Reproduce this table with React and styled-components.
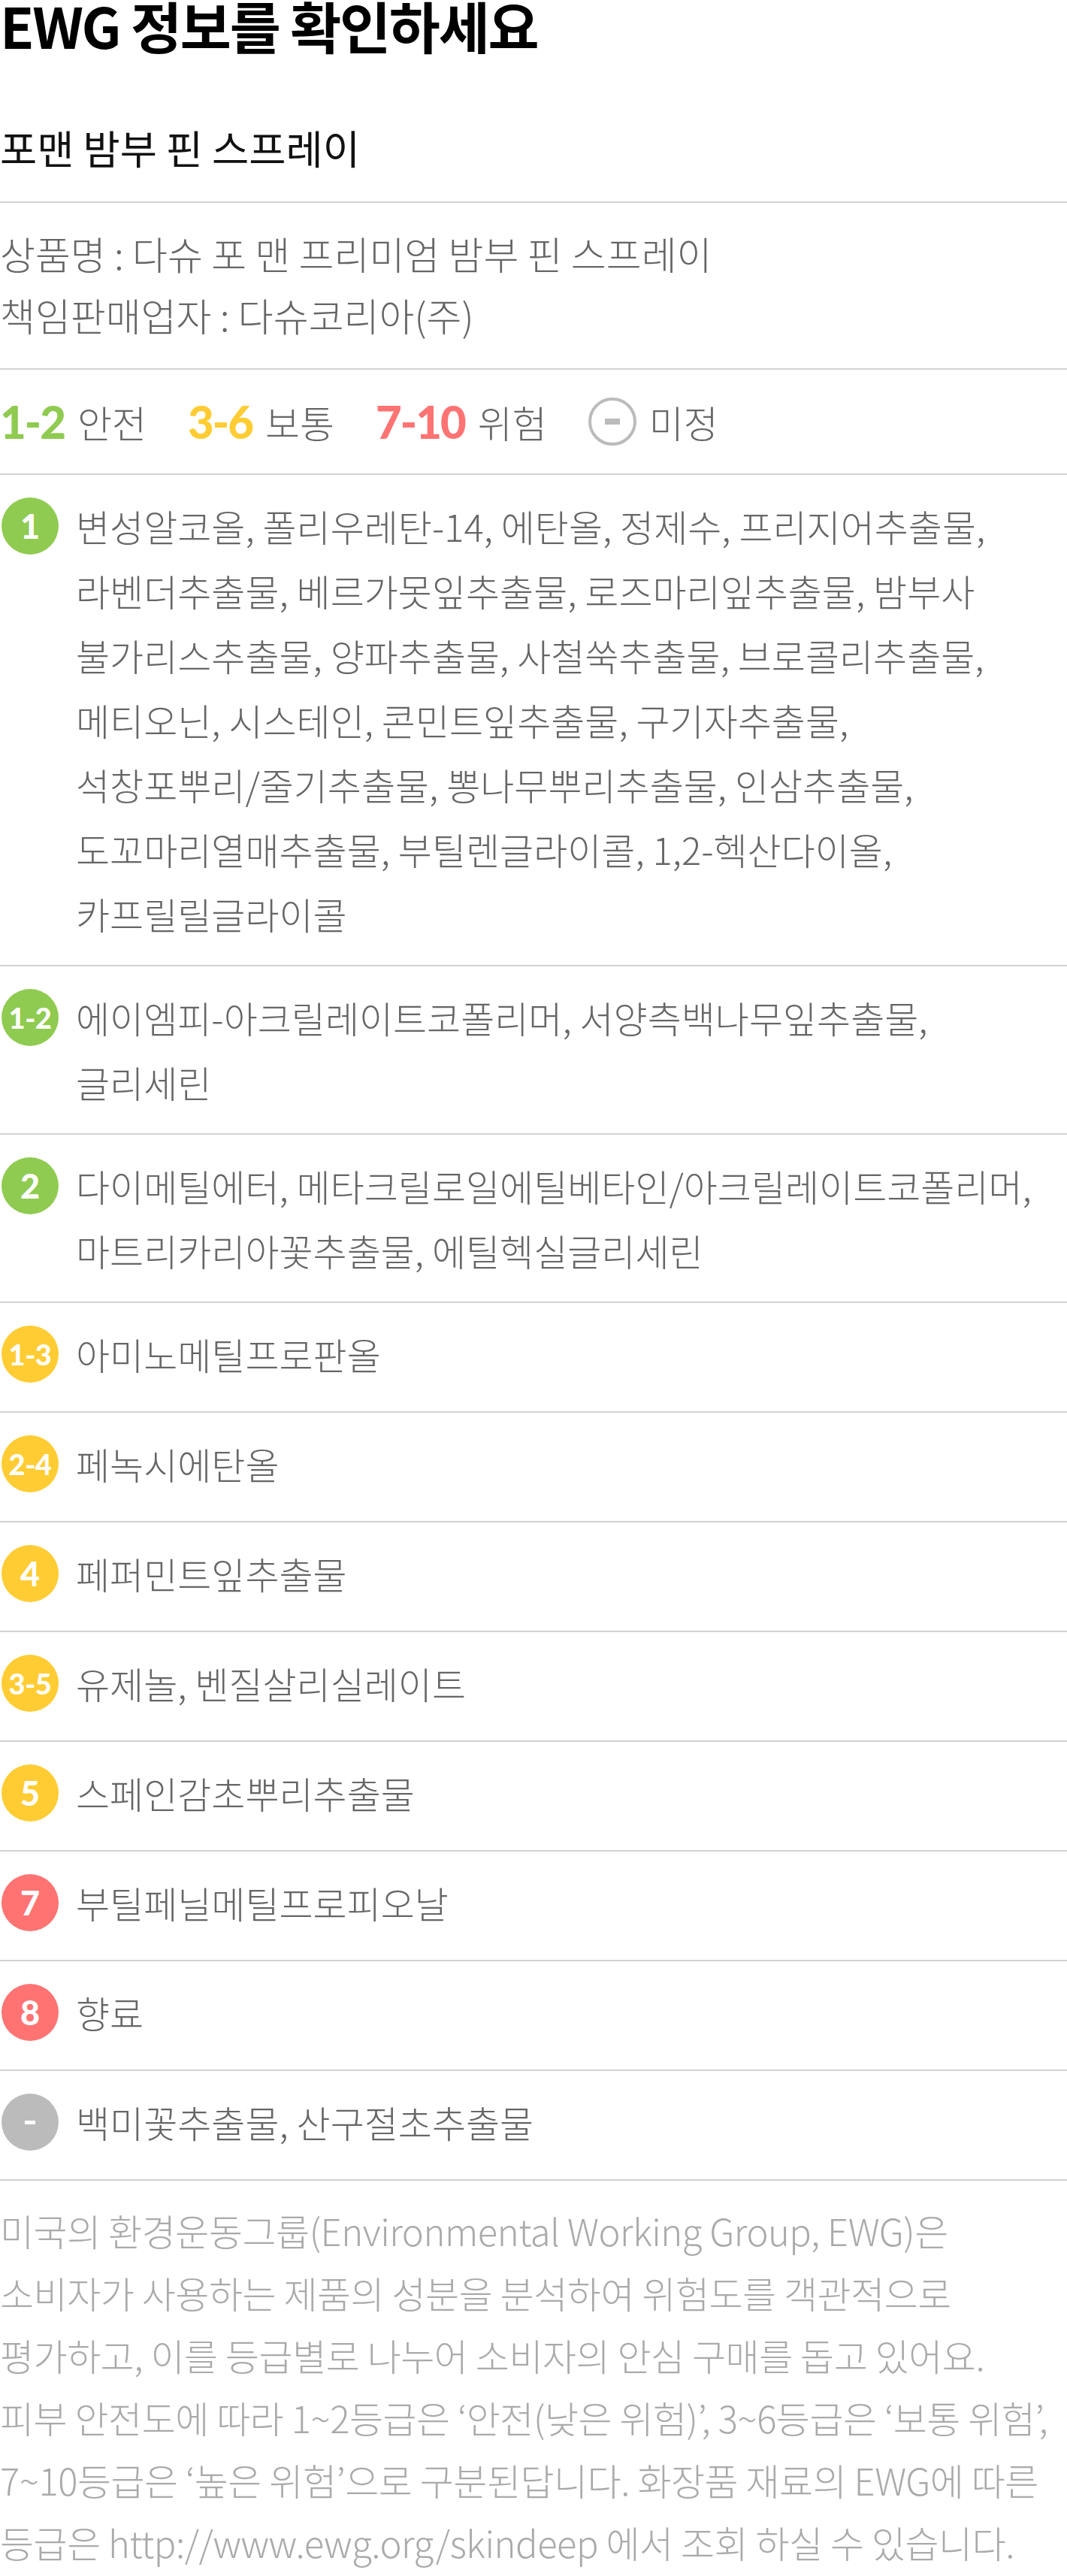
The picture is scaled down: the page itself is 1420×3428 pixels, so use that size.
import React from 'react';
import styled, { createGlobalStyle } from 'styled-components';

const GlobalStyle = createGlobalStyle`
  html, body { margin: 0; padding: 0; background: #fff; }
  body {
    font-family: "Noto Sans CJK KR", "Noto Sans", sans-serif;
    -webkit-font-smoothing: antialiased;
  }
  * { box-sizing: border-box; }
`;

const COLORS = {
  green: '#8fcb50',
  yellow: '#ffcc33',
  red: '#ff7373',
  gray: '#bbbbbb',
};

const Page = styled.main`
  width: 1420px;
  word-break: keep-all;
`;

const Title = styled.h1`
  margin: 0;
  font-size: 74px;
  font-weight: 700;
  line-height: 66px;
  letter-spacing: -0.03em;
  color: #000;
`;

const ProductName = styled.h2`
  margin: 0;
  padding: 90px 0 32px;
  border-bottom: 2px solid #d2d2d2;
  font-size: 53.5px;
  font-weight: 400;
  line-height: 80px;
  color: #111;
`;

const Info = styled.section`
  padding: 26px 0 30px;
  border-bottom: 2px solid #d2d2d2;
`;

const InfoLine = styled.p`
  margin: 0;
  font-size: 51px;
  font-weight: 300;
  line-height: 82px;
  color: #666;
`;

const Legend = styled.section`
  display: flex;
  align-items: center;
  gap: 55px;
  height: 140px;
  border-bottom: 2px solid #d2d2d2;
`;

const LegendItem = styled.div`
  display: flex;
  align-items: center;
  gap: 17px;
`;

const LegendRange = styled.span`
  font-family: "Lato", "Noto Sans", sans-serif;
  font-weight: 900;
  font-size: 60px;
  line-height: 1;
  letter-spacing: -2px;
  color: ${(p) => p.$color};
`;

const LegendLabel = styled.span`
  font-size: 50px;
  font-weight: 300;
  line-height: 1;
  color: #666;
`;

const UnsetMark = styled.span`
  display: flex;
  align-items: center;
  justify-content: center;
  width: 64px;
  height: 64px;
  border: 4px solid #bbb;
  border-radius: 50%;
`;

const UnsetDash = styled.span`
  display: block;
  width: 20px;
  height: 8px;
  background: #bbb;
`;

const Row = styled.section`
  display: flex;
  align-items: flex-start;
  gap: 23px;
  min-height: 146px;
  padding: 25px 20px 25px 2px;
  border-bottom: 2px solid #d2d2d2;
`;

const Badge = styled.span`
  flex: none;
  display: flex;
  align-items: center;
  justify-content: center;
  width: 76px;
  height: 76px;
  margin-top: 5px;
  border-radius: 50%;
  background: ${(p) => p.$color};
  color: #fff;
  font-family: "Lato", "Noto Sans", sans-serif;
  font-weight: 900;
  font-size: ${(p) => (p.$long ? '38px' : '45px')};
  letter-spacing: ${(p) => (p.$long ? '-0.5px' : '0')};
  line-height: 1;
`;

const BadgeDash = styled.span`
  display: block;
  width: 14px;
  height: 5px;
  background: #fff;
`;

const Ingredients = styled.p`
  flex: 1;
  margin: 0;
  font-size: 49px;
  font-weight: 300;
  line-height: 86px;
  color: #666;
`;

const Name = styled.span`
  white-space: nowrap;
`;

const Footer = styled.footer`
  padding-top: 24px;
`;

const FooterText = styled.p`
  margin: 0;
  font-size: 49px;
  font-weight: 300;
  line-height: 83px;
  letter-spacing: -0.01em;
  color: #aaa;
`;

const FooterLine = styled.span`
  display: block;
  white-space: nowrap;
`;

const ROWS = [
  {
    grade: '1',
    color: 'green',
    names: [
      '변성알코올', '폴리우레탄-14', '에탄올', '정제수', '프리지어추출물',
      '라벤더추출물', '베르가못잎추출물', '로즈마리잎추출물', ['밤부사', '불가리스추출물'],
      '양파추출물', '사철쑥추출물', '브로콜리추출물', '메티오닌', '시스테인',
      '콘민트잎추출물', '구기자추출물', '석창포뿌리/줄기추출물', '뽕나무뿌리추출물',
      '인삼추출물', '도꼬마리열매추출물', '부틸렌글라이콜', '1,2-헥산다이올', '카프릴릴글라이콜',
    ],
  },
  { grade: '1-2', color: 'green', names: ['에이엠피-아크릴레이트코폴리머', '서양측백나무잎추출물', '글리세린'] },
  {
    grade: '2',
    color: 'green',
    names: ['다이메틸에터', '메타크릴로일에틸베타인/아크릴레이트코폴리머', '마트리카리아꽃추출물', '에틸헥실글리세린'],
  },
  { grade: '1-3', color: 'yellow', names: ['아미노메틸프로판올'] },
  { grade: '2-4', color: 'yellow', names: ['페녹시에탄올'] },
  { grade: '4', color: 'yellow', names: ['페퍼민트잎추출물'] },
  { grade: '3-5', color: 'yellow', names: ['유제놀', '벤질살리실레이트'] },
  { grade: '5', color: 'yellow', names: ['스페인감초뿌리추출물'] },
  { grade: '7', color: 'red', names: ['부틸페닐메틸프로피오날'] },
  { grade: '8', color: 'red', names: ['향료'] },
  { grade: '-', color: 'gray', names: ['백미꽃추출물', '산구절초추출물'] },
];

const FOOTER_LINES = [
  '미국의 환경운동그룹(Environmental Working Group, EWG)은',
  '소비자가 사용하는 제품의 성분을 분석하여 위험도를 객관적으로',
  '평가하고, 이를 등급별로 나누어 소비자의 안심 구매를 돕고 있어요.',
  '피부 안전도에 따라 1~2등급은 ‘안전(낮은 위험)’, 3~6등급은 ‘보통 위험’,',
  '7~10등급은 ‘높은 위험’으로 구분된답니다. 화장품 재료의 EWG에 따른',
  '등급은 http://www.ewg.org/skindeep 에서 조회 하실 수 있습니다.',
];

function IngredientList({ names }) {
  return (
    <Ingredients>
      {names.map((n, i) => {
        const last = i === names.length - 1;
        const comma = last ? '' : ',';
        const space = last ? '' : ' ';
        if (Array.isArray(n)) {
          return (
            <React.Fragment key={i}>
              <Name>{n[0]}</Name>
              <wbr />
              <Name>{n[1] + comma}</Name>
              {space}
            </React.Fragment>
          );
        }
        return (
          <React.Fragment key={i}>
            <Name>{n + comma}</Name>
            {space}
          </React.Fragment>
        );
      })}
    </Ingredients>
  );
}

export default function App() {
  return (
    <>
      <GlobalStyle />
      <Page>
        <Title>EWG 정보를 확인하세요</Title>
        <ProductName>포맨 밤부 핀 스프레이</ProductName>
        <Info>
          <InfoLine>상품명 : 다슈 포 맨 프리미엄 밤부 핀 스프레이</InfoLine>
          <InfoLine>책임판매업자 : 다슈코리아(주)</InfoLine>
        </Info>
        <Legend>
          <LegendItem>
            <LegendRange $color={COLORS.green}>1-2</LegendRange>
            <LegendLabel>안전</LegendLabel>
          </LegendItem>
          <LegendItem>
            <LegendRange $color={COLORS.yellow}>3-6</LegendRange>
            <LegendLabel>보통</LegendLabel>
          </LegendItem>
          <LegendItem>
            <LegendRange $color={COLORS.red}>7-10</LegendRange>
            <LegendLabel>위험</LegendLabel>
          </LegendItem>
          <LegendItem>
            <UnsetMark>
              <UnsetDash />
            </UnsetMark>
            <LegendLabel>미정</LegendLabel>
          </LegendItem>
        </Legend>
        {ROWS.map((r) => (
          <Row key={r.grade}>
            <Badge $color={COLORS[r.color]} $long={r.grade.length > 1}>
              {r.grade === '-' ? <BadgeDash /> : r.grade}
            </Badge>
            <IngredientList names={r.names} />
          </Row>
        ))}
        <Footer>
          <FooterText>
            {FOOTER_LINES.map((l) => (
              <FooterLine key={l}>{l}</FooterLine>
            ))}
          </FooterText>
        </Footer>
      </Page>
    </>
  );
}
